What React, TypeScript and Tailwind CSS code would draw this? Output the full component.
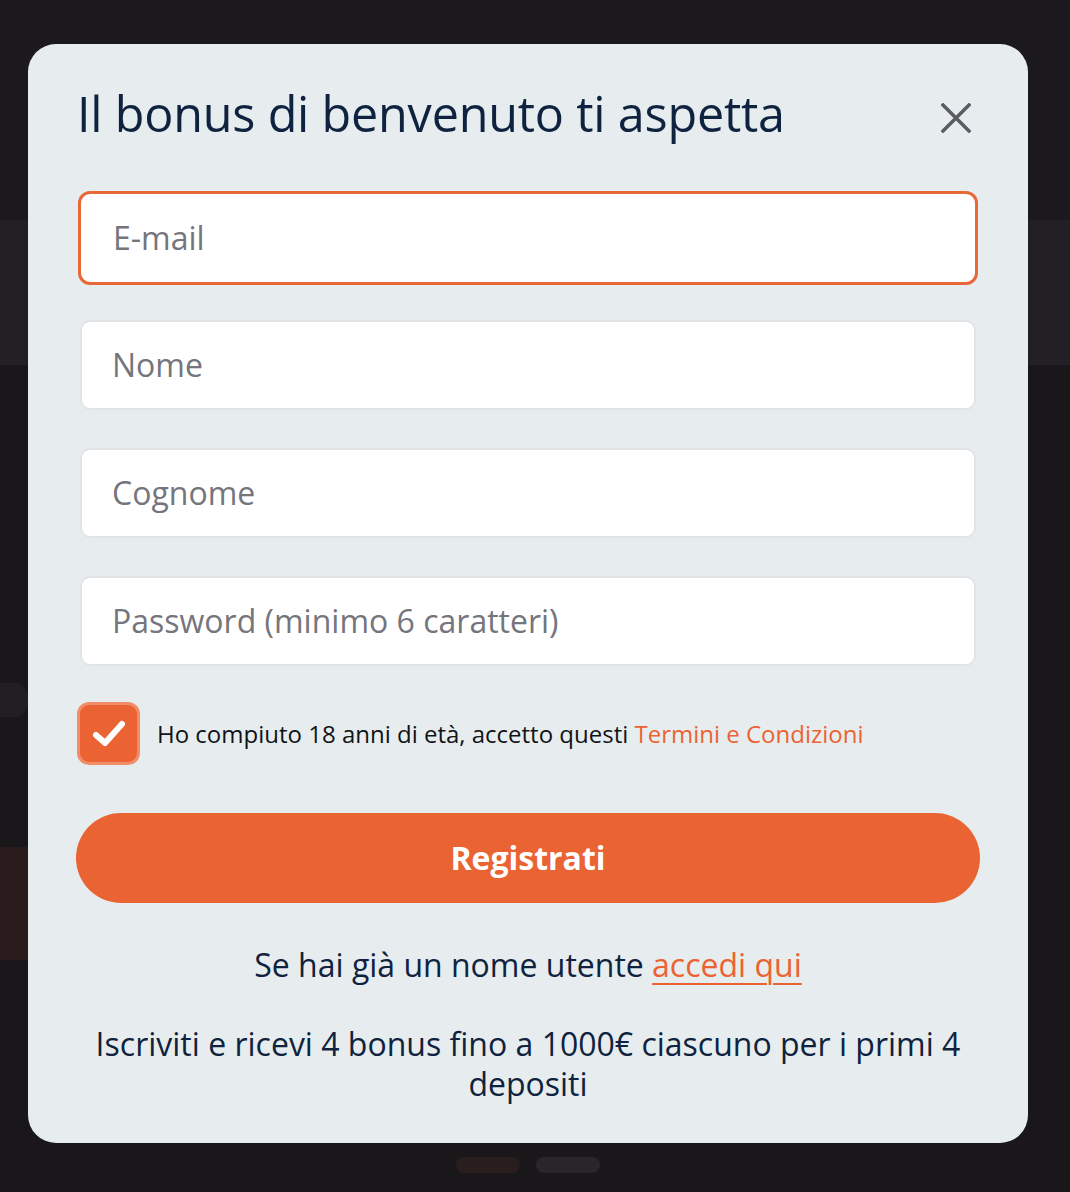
import React from "react";

export default function App() {
  const font = { fontFamily: '"Open Sans", "Noto Sans", sans-serif' };
  return (
    <div className="relative w-[1070px] h-[1192px] overflow-hidden bg-[#1a171b]" style={font}>
      {/* background page (dimmed) */}
      <div className="flex flex-col h-full">
        <div className="h-[220px] bg-[#1b191d]" />
        <div className="h-[145px] bg-[#222024]" />
        <div className="flex-1 bg-[#1a171b] flex flex-col">
          <div className="h-[318px]" />
          <div className="h-[34px] w-[28px] rounded-r-[14px] bg-[#221f24]" />
          <div className="h-[130px]" />
          <div className="h-[113px] w-[200px] bg-[#2a1c1d]" />
          <div className="flex-1" />
          <div className="flex justify-center gap-4 pb-[19px] pr-[14px]">
            <div className="w-[64px] h-[16px] rounded-full bg-[#2a1d1d]" />
            <div className="w-[64px] h-[16px] rounded-full bg-[#29252a]" />
          </div>
        </div>
      </div>

      {/* modal */}
      <div className="absolute left-[28px] top-[44px] w-[1000px] h-[1099px] rounded-[28px] bg-[#e7edee] px-[50px] pt-[36px]">
        <div className="flex items-start justify-between">
          <h1 className="text-[48.5px] leading-[66px] text-[#0f2340] font-normal tracking-[-0.2px] -ml-[1px]">
            Il bonus di benvenuto ti aspetta
          </h1>
          <button className="w-[40px] h-[40px] flex items-center justify-center mr-[2px] mt-[18px]">
            <svg width="30" height="30" viewBox="0 0 30 30">
              <path d="M2 2 L28 28 M28 2 L2 28" stroke="#5b5c63" strokeWidth="3.5" strokeLinecap="square" />
            </svg>
          </button>
        </div>

        <div className="mt-[45px] flex flex-col gap-[36px]">
          <div className="h-[94px] rounded-[12px] border-[3px] border-[#e9683a] bg-white flex items-center pl-[32px]">
            <span className="text-[32px] text-[#75757d]">E-mail</span>
          </div>
          <div className="mx-[2px] h-[90px] rounded-[10px] border-[2px] border-[#e1e4e6] bg-white flex items-center pl-[30px] -mt-[1px]">
            <span className="text-[32px] text-[#75757d]">Nome</span>
          </div>
          <div className="mx-[2px] h-[90px] rounded-[10px] border-[2px] border-[#e1e4e6] bg-white flex items-center pl-[30px] mt-[2px]">
            <span className="text-[32px] text-[#75757d]">Cognome</span>
          </div>
          <div className="mx-[2px] h-[90px] rounded-[10px] border-[2px] border-[#e1e4e6] bg-white flex items-center pl-[30px] mt-[2px]">
            <span className="text-[32px] text-[#75757d]">Password (minimo 6 caratteri)</span>
          </div>
        </div>

        <div className="mt-[36px] flex items-center gap-[17px] -ml-[1px]">
          <div className="w-[63px] h-[63px] rounded-[12px] bg-[#ec6333] border-[3px] border-[#f28c69] flex items-center justify-center">
            <svg width="34" height="28" viewBox="0 0 34 28">
              <path d="M4 15 L13 23 L30 4" fill="none" stroke="white" strokeWidth="6" strokeLinecap="round" strokeLinejoin="round" />
            </svg>
          </div>
          <p className="text-[24px] text-[#111318]">
            Ho compiuto 18 anni di età, accetto questi <span className="text-[#ec6333]">Termini e Condizioni</span>
          </p>
        </div>

        <button className="mt-[48px] -mx-[2px] w-[904px] h-[90px] rounded-full bg-[#ea6333] text-white text-[32px] font-bold flex items-center justify-center">
          Registrati
        </button>

        <p className="mt-[37px] text-center text-[32px] leading-[50px] text-[#0f2340]">
          Se hai già un nome utente <span className="text-[#ec6333] underline underline-offset-[6px] decoration-[2px]">accedi qui</span>
        </p>

        <p className="mt-[34px] text-center text-[32px] leading-[40px] text-[#0f2340] px-[6px]">
          Iscriviti e ricevi 4 bonus fino a 1000€ ciascuno per i primi 4 depositi
        </p>
      </div>
    </div>
  );
}
